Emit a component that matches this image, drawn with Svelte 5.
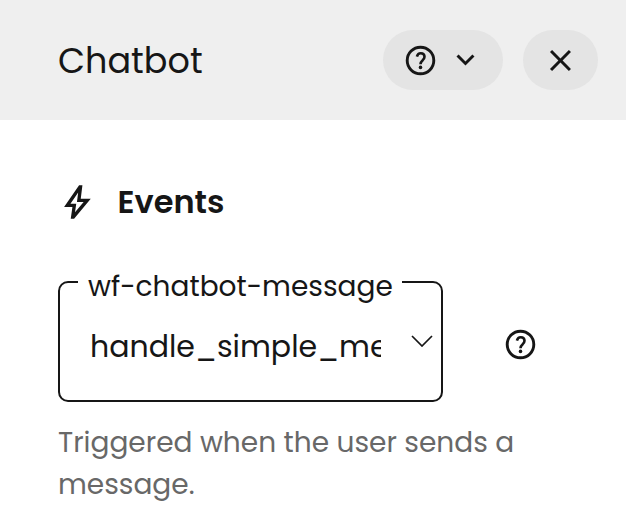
<script>
  const eventName = 'wf-chatbot-message';
  const handler = 'handle_simple_message';
</script>

{#snippet help()}
  <svg class="icon help" viewBox="0 0 37 37" aria-hidden="true">
    <circle class="ring" cx="18.500" cy="18.500" r="13.300" />
    <path class="hook" d="M14.900 14.600C15.500 12.300 16.900 11.200 18.700 11.200C21 11.200 22.500 12.600 22.500 14.700C22.500 16.100 21.900 17 20.700 18.200C19.200 19.600 18.500 20.300 18.500 22.200" />
    <circle cx="18.500" cy="25.400" r="1.800" />
  </svg>
{/snippet}

<div class="panel">
  <header>
    <h1>Chatbot</h1>
    <div class="actions">
      <button class="pill docs" aria-label="Help">
        {@render help()}
        <svg class="icon" viewBox="-13 -973 987 987" aria-hidden="true"><path d="M480-344 240-584l56-56 184 184 184-184 56 56-240 240Z" /></svg>
      </button>
      <button class="pill close" aria-label="Close">
        <svg class="icon" viewBox="-13 -973 987 987" aria-hidden="true"><path d="m256-200-56-56 224-224-224-224 56-56 224 224 224-224 56 56-224 224 224 224-56 56-224-224-224 224Z" /></svg>
      </button>
    </div>
  </header>

  <section>
    <div class="heading">
      <svg class="bolt" viewBox="-10 -960 960 960" aria-hidden="true"><path d="m422-232 207-248H469l29-227-185 267h139l-30 208ZM320-80l40-280H160l360-520h80l-40 320h240L400-80h-80Z" /></svg>
      <h2>Events</h2>
    </div>

    <div class="row">
      <fieldset>
        <legend><span>{eventName}</span></legend>
        <div class="select">
          <span class="value">{handler}</span>
          <svg class="arrow" viewBox="0 0 22 12" aria-hidden="true"><path d="M1 1 11 11 21 1" /></svg>
        </div>
      </fieldset>
      <button class="info" aria-label="About this event">{@render help()}</button>
    </div>

    <p>Triggered when the user sends a message.</p>
  </section>
</div>

<style>
  :global(body) {
    background: #fff;
  }
  .panel {
    width: 626px;
    height: 518px;
    overflow: hidden;
    color: #161616;
    background: #fff;
    font-family: Poppins, Inter, "Open Sans", sans-serif;
  }
  header {
    box-sizing: border-box;
    height: 120px;
    padding: 0 28px 0 58px;
    display: flex;
    align-items: center;
    justify-content: space-between;
    background: #efefef;
  }
  h1, h2, p {
    margin: 0;
    white-space: nowrap;
  }
  h1 {
    padding-top: 2px;
    font-size: 35px;
    line-height: 40px;
    font-weight: 400;
  }
  .actions {
    display: flex;
    gap: 20px;
  }
  button {
    border: 0;
    padding: 0;
    color: inherit;
    background: none;
    display: flex;
    align-items: center;
    justify-content: center;
  }
  .pill {
    box-sizing: border-box;
    height: 60px;
    padding: 1px 0 0;
    border-radius: 30px;
    background: #e4e4e4;
  }
  .docs {
    width: 120px;
    gap: 8px;
  }
  .close {
    width: 75px;
  }
  .icon {
    display: block;
    width: 37px;
    height: 37px;
    fill: currentColor;
  }
  .ring, .hook {
    fill: none;
    stroke: currentColor;
  }
  .ring {
    stroke-width: 2.9;
  }
  .hook {
    stroke-width: 2.6;
  }
  section {
    padding: 61px 0 0 57px;
  }
  .heading {
    display: flex;
    align-items: center;
    gap: 20.5px;
    height: 42px;
  }
  .bolt {
    width: 40px;
    height: 40px;
    fill: currentColor;
  }
  h2 {
    font-size: 32px;
    line-height: 42px;
    font-weight: 600;
  }
  .row {
    display: flex;
    margin: 40px 0 0 1px;
  }
  fieldset {
    box-sizing: border-box;
    width: 385px;
    height: 139px;
    min-width: 0;
    margin: 0;
    padding: 0 8px 0 30px;
    border: 2px solid #161616;
    border-radius: 10px;
  }
  legend {
    box-sizing: border-box;
    width: 324px;
    height: 38px;
    margin-left: -12px;
    padding: 9px 0 0 10px;
    font-size: 28px;
    line-height: 30px;
    white-space: nowrap;
  }
  .select {
    display: flex;
    align-items: center;
    justify-content: space-between;
    height: 92px;
  }
  .value {
    width: 291px;
    overflow: hidden;
    white-space: nowrap;
    font-size: 30px;
    line-height: 44px;
  }
  .arrow {
    width: 22px;
    height: 12px;
    margin-bottom: 12px;
    fill: none;
    stroke: currentColor;
    stroke-width: 1.7;
  }
  .info {
    width: 37px;
    height: 37px;
    margin: 63px 0 0 59px;
  }
  p {
    width: 470px;
    margin: 20px 0 0 1px;
    font-size: 28px;
    line-height: 42px;
    color: #686868;
    white-space: normal;
  }
</style>
